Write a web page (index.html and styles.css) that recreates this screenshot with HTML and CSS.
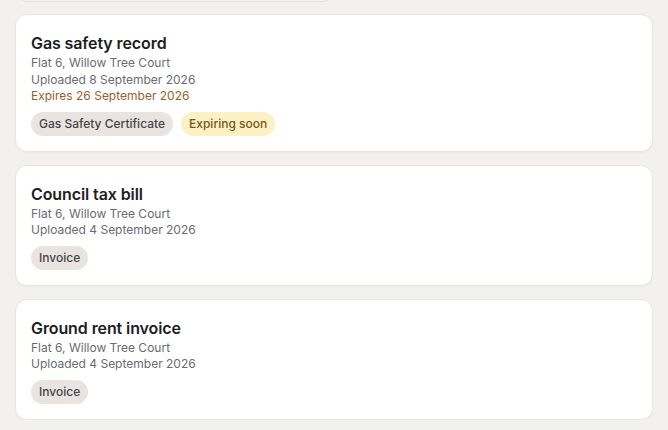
FILE: index.html
```html
<!DOCTYPE html>
<html lang="en">
<head>
<meta charset="utf-8">
<link rel="stylesheet" href="styles.css">
</head>
<body>
<div class="page">
  <div class="prev"></div>
  <div class="card">
    <h2 class="title">Gas safety record</h2>
    <p class="meta">Flat 6, Willow Tree Court</p>
    <p class="meta">Uploaded 8 September 2026</p>
    <p class="meta expires">Expires 26 September 2026</p>
    <div class="tags">
      <span class="tag">Gas Safety Certificate</span>
      <span class="tag warn">Expiring soon</span>
    </div>
  </div>
  <div class="card">
    <h2 class="title">Council tax bill</h2>
    <p class="meta">Flat 6, Willow Tree Court</p>
    <p class="meta">Uploaded 4 September 2026</p>
    <div class="tags">
      <span class="tag">Invoice</span>
    </div>
  </div>
  <div class="card">
    <h2 class="title">Ground rent invoice</h2>
    <p class="meta">Flat 6, Willow Tree Court</p>
    <p class="meta">Uploaded 4 September 2026</p>
    <div class="tags">
      <span class="tag">Invoice</span>
    </div>
  </div>
</div>
</body>
</html>
```
FILE: styles.css
```css
html, body {
  margin: 0;
  padding: 0;
  background: #f3f1ed;
}
body {
  font-family: Inter, "Noto Sans", sans-serif;
  color: #1d1d22;
}
.page {
  padding: 0 15px;
  display: flex;
  flex-direction: column;
  gap: 13px;
}
.prev {
  width: 320px;
  height: 40px;
  margin-top: -38px;
  box-sizing: border-box;
  background: #f6f4f1;
  border: 1px solid #e6e2dc;
  border-radius: 12px;
}
.prev + .card {
  margin-top: -1px;
}
.card {
  background: #ffffff;
  border: 1px solid #e9e5df;
  border-radius: 12px;
  padding: 16px 15px 15px;
  box-shadow: 0 1px 2px rgba(60, 50, 30, 0.04);
}
.title {
  margin: 0;
  font-size: 16px;
  font-weight: 600;
  line-height: 24px;
  color: #1d1d22;
  letter-spacing: -0.1px;
}
.meta {
  margin: 0;
  font-size: 12px;
  line-height: 16.5px;
  color: #6a6b73;
}
.meta.expires {
  color: #97602a;
}
.tags {
  display: flex;
  gap: 8px;
  margin-top: 7px;
}
.tag {
  display: inline-block;
  height: 24px;
  line-height: 24px;
  padding: 0 8px;
  border-radius: 12px;
  background: #e9e4df;
  color: #45454b;
  font-size: 12px;
  font-weight: 500;
}
.tag.warn {
  background: #fcf1c4;
  color: #7b5617;
}
```
